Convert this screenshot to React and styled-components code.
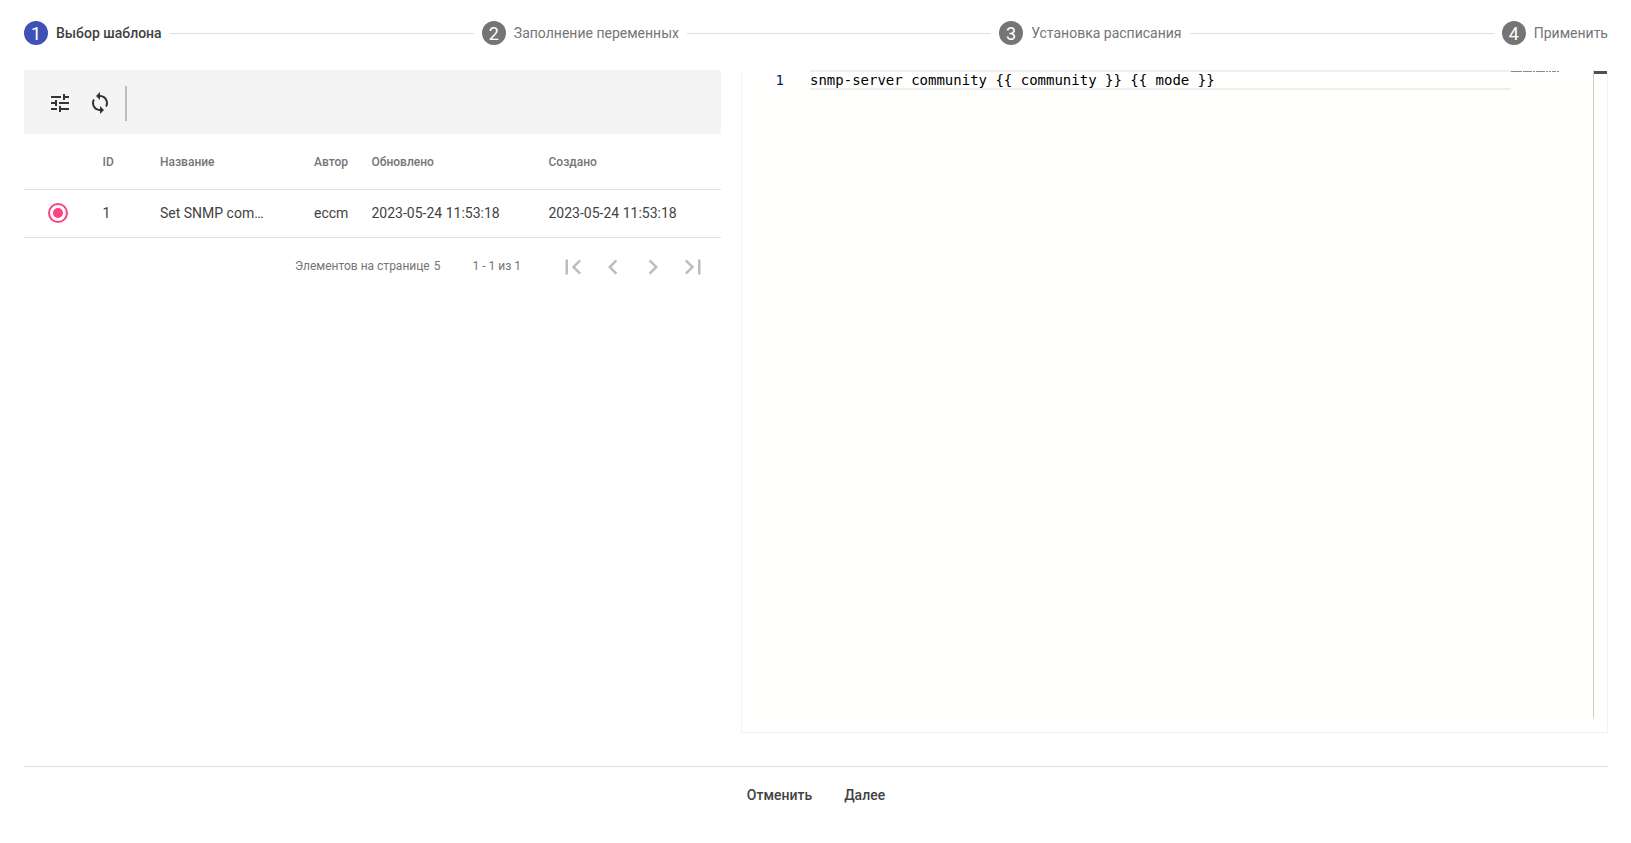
import React from 'react';
import styled, { createGlobalStyle } from 'styled-components';

const Global = createGlobalStyle`
  html, body { margin: 0; padding: 0; background: #fff; }
  body { font-family: Roboto, "Liberation Sans", sans-serif; color: #424242; }
`;
const Page = styled.div`
  width: 1631px; height: 843px; box-sizing: border-box; padding: 0 23px 0 24px;
  display: flex; flex-direction: column; overflow: hidden;
`;
const Stepper = styled.div`
  height: 70px; flex: none; box-sizing: border-box; padding-bottom: 4px;
  display: flex; align-items: center;
`;
const Step = styled.div`display: flex; align-items: center; flex: none;`;
const StepCircle = styled.div`
  width: 24px; height: 24px; border-radius: 50%; color: #fff; font-size: 18px; font-weight: 400;
  background: ${p => (p.$active ? '#3f51b5' : '#757575')};
  display: flex; align-items: center; justify-content: center; margin-right: 8px;
`;
const StepLabel = styled.div`
  font-size: 14px; line-height: 20px;
  font-weight: ${p => (p.$active ? 500 : 400)};
  color: ${p => (p.$active ? '#424242' : '#757575')};
`;
const StepLine = styled.div`flex: 1; height: 1px; background: #e0e0e0; margin: 0 8px;`;
const Body = styled.div`flex: none; height: 663px; display: flex; gap: 20px;`;
const Left = styled.div`width: 697px; flex: none;`;
const Toolbar = styled.div`
  height: 64px; box-sizing: border-box; background: #f4f4f4; padding: 2px 0 0 16px;
  display: flex; align-items: center;
`;
const ToolButton = styled.div`
  width: 40px; height: 40px; display: flex; align-items: center; justify-content: center;
  color: #333; svg { width: 24px; height: 24px; fill: currentColor; display: block; }
`;
const ToolDivider = styled.div`width: 2px; height: 35px; background: #bdbdbd; margin-left: 5px;`;
const Row = styled.div`
  display: grid; grid-template-columns: 78.5px 57.5px 154px 57.5px 177px 1fr;
  align-items: center; box-sizing: border-box;
  height: ${p => (p.$head ? '56px' : '48px')}; border-bottom: 1px solid #e0e0e0;
  padding-bottom: ${p => (p.$head ? '0' : '2px')};
`;
const HeadCell = styled.div`font-size: 12px; font-weight: 500; color: #757575;`;
const Cell = styled.div`font-size: 14px; color: #424242;`;
const Radio = styled.div`
  width: 20px; height: 20px; box-sizing: border-box; margin-left: 24px;
  border: 2px solid #ff4081; border-radius: 50%;
  display: flex; align-items: center; justify-content: center;
  &::after { content: ''; width: 10px; height: 10px; background: #ff4081; border-radius: 50%; }
`;
const Pager = styled.div`height: 56px; display: flex; align-items: center; padding-left: 271px;`;
const PagerText = styled.div`font-size: 12px; color: #757575; white-space: pre;`;
const PagerValue = styled.span`margin-left: 4px;`;
const PagerRange = styled(PagerText)`margin-left: 32px; width: 81px;`;
const PagerButton = styled.div`
  width: 40px; height: 40px; margin-top: 2px; display: flex; align-items: center; justify-content: center;
  color: #bdbdbd; svg { width: 30px; height: 30px; fill: currentColor; display: block; }
`;
const Editor = styled.div`
  flex: 1; display: flex; background: #fffffe; border: 1px solid #f2f2f2; border-top: 0;
  box-sizing: border-box; padding-bottom: 14px;
`;
const Gutter = styled.div`
  width: 68px; flex: none; box-sizing: border-box; padding-right: 26px; text-align: right;
  font: 14px/21px "DejaVu Sans Mono", "Liberation Mono", monospace; color: #0b216f;
`;
const Code = styled.div`flex: 1; min-width: 0;`;
const CodeLine = styled.div`
  height: 20px; box-sizing: border-box; border: solid #eeeeee; border-width: 2px 0;
  font: 14px/16px "DejaVu Sans Mono", "Liberation Mono", monospace; color: #000; white-space: pre;
`;
const Minimap = styled.div`width: 83px; flex: none; box-sizing: border-box; border-right: 1px solid #cfcfcf; svg { display: block; }`;
const ScrollStrip = styled.div`
  width: 13px; flex: none; padding-top: 1px;
  &::before { content: ''; display: block; height: 3px; background: #505050; }
`;
const Footer = styled.div`
  margin-top: 33px; height: 57px; box-sizing: border-box; border-top: 1px solid #e0e0e0; padding-bottom: 1px;
  display: flex; align-items: center; justify-content: center;
`;
const FooterButton = styled.button`
  border: 0; background: none; padding: 0 16px; height: 36px;
  font: 500 14px Roboto, sans-serif; color: #424242;
`;

const steps = ['Выбор шаблона', 'Заполнение переменных', 'Установка расписания', 'Применить'];
const pager = [
  'M18.41 16.59L13.82 12l4.59-4.59L17 6l-6 6 6 6zM6 6h2v12H6z',
  'M15.41 7.41L14 6l-6 6 6 6 1.41-1.41L10.83 12z',
  'M10 6L8.59 7.41 13.17 12l-4.58 4.59L10 18l6-6z',
  'M5.59 7.41L10.18 12l-4.59 4.59L7 18l6-6-6-6zM16 6h2v12h-2z',
];
const miniWords = [[0, 11], [12, 9], [22, 2], [25, 9], [35, 2], [38, 2], [41, 4], [46, 2]];

export default function App() {
  return (
    <Page>
      <Global />
      <Stepper>
        {steps.map((s, i) => (
          <React.Fragment key={s}>
            <Step>
              <StepCircle $active={i === 0}>{i + 1}</StepCircle>
              <StepLabel $active={i === 0}>{s}</StepLabel>
            </Step>
            {i < 3 && <StepLine />}
          </React.Fragment>
        ))}
      </Stepper>
      <Body>
        <Left>
          <Toolbar>
            <ToolButton>
              <svg viewBox="0 0 24 24"><path d="M3 17v2h6v-2H3zM3 5v2h10V5H3zm10 16v-2h8v-2h-8v-2h-2v6h2zM7 9v2H3v2h4v2h2V9H7zm14 4v-2H11v2h10zm-6-4h2V7h4V5h-4V3h-2v6z" /></svg>
            </ToolButton>
            <ToolButton>
              <svg viewBox="0 0 24 24"><path d="M12 4V1L8 5l4 4V6c3.31 0 6 2.69 6 6 0 1.01-.25 1.97-.7 2.8l1.46 1.46C19.54 15.03 20 13.57 20 12c0-4.42-3.58-8-8-8zm0 14c-3.31 0-6-2.69-6-6 0-1.01.25-1.97.7-2.8L5.24 7.74C4.46 8.97 4 10.43 4 12c0 4.42 3.58 8 8 8v3l4-4-4-4v3z" /></svg>
            </ToolButton>
            <ToolDivider />
          </Toolbar>
          <Row $head>
            <span />
            <HeadCell>ID</HeadCell>
            <HeadCell>Название</HeadCell>
            <HeadCell>Автор</HeadCell>
            <HeadCell>Обновлено</HeadCell>
            <HeadCell>Создано</HeadCell>
          </Row>
          <Row>
            <Radio />
            <Cell>1</Cell>
            <Cell>Set SNMP com…</Cell>
            <Cell>eccm</Cell>
            <Cell>2023-05-24 11:53:18</Cell>
            <Cell>2023-05-24 11:53:18</Cell>
          </Row>
          <Pager>
            <PagerText>Элементов на странице<PagerValue>5</PagerValue></PagerText>
            <PagerRange>1 - 1 из 1</PagerRange>
            {pager.map(d => (
              <PagerButton key={d}><svg viewBox="0 0 24 24"><path d={d} /></svg></PagerButton>
            ))}
          </Pager>
        </Left>
        <Editor>
          <Gutter>1</Gutter>
          <Code>
            <CodeLine>{'snmp-server community {{ community }} {{ mode }}'}</CodeLine>
          </Code>
          <Minimap>
            <svg width="82" height="3" viewBox="0 0 82 3">
              {miniWords.map(([x, w]) => (
                <rect key={x} x={x} y="1" width={w} height="1" fill="#8a8a8a" />
              ))}
            </svg>
          </Minimap>
          <ScrollStrip />
        </Editor>
      </Body>
      <Footer>
        <FooterButton>Отменить</FooterButton>
        <FooterButton>Далее</FooterButton>
      </Footer>
    </Page>
  );
}
